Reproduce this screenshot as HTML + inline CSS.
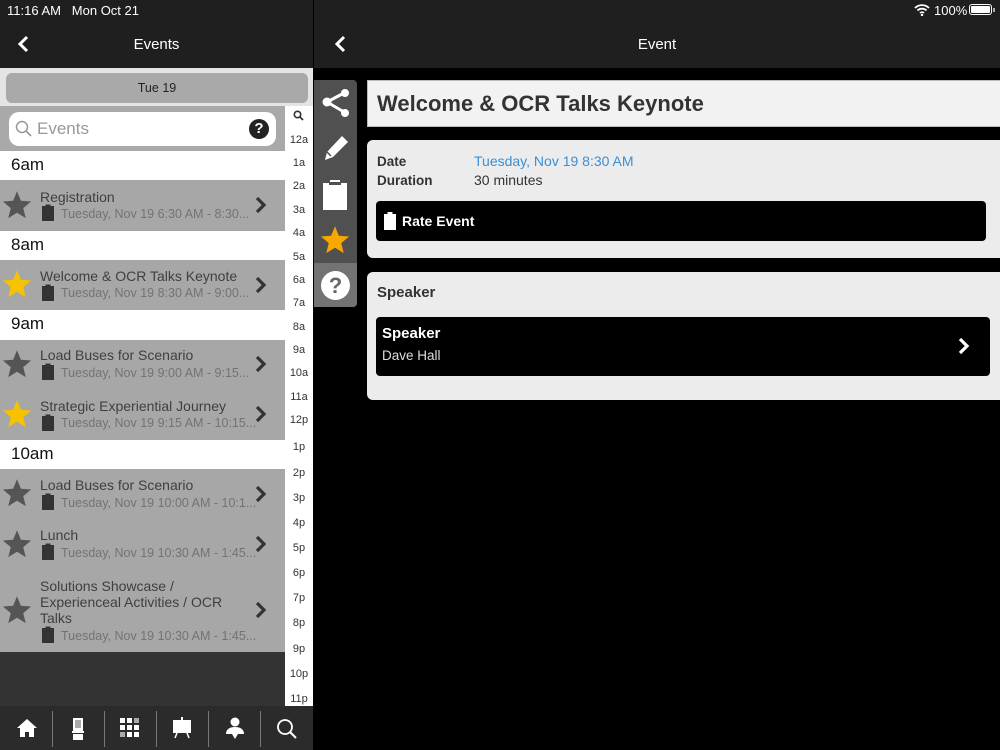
<!DOCTYPE html>
<html><head><meta charset="utf-8"><style>
*{margin:0;padding:0;box-sizing:border-box}
body{width:1000px;height:750px;background:#000;font-family:"Liberation Sans",sans-serif;position:relative;overflow:hidden}
.a{position:absolute}
.row{position:absolute;left:0;width:285px;background:#a7a7a7}
.sec{position:absolute;left:0;width:285px;background:#fff;font-size:17px;color:#111;padding-left:11px;line-height:28px}
.t{position:absolute;left:40px;font-size:14px;color:#3f3f3f;line-height:16px;width:200px}
.s{position:absolute;left:61px;font-size:12.5px;color:#737373;white-space:nowrap}
.idx{position:absolute;left:285px;width:28px;text-align:center;font-size:11px;color:#333}
.tab{position:absolute;top:711px;width:1px;height:36px;background:#777}
</style></head><body>
<!-- left panel -->
<div class="a" style="left:0;top:0;width:313px;height:750px;background:#333"></div>
<div class="a" style="left:0;top:0;width:1000px;height:68px;background:#1f1f1f"></div>
<div class="a" style="left:7px;top:3px;font-size:13px;color:#fff">11:16 AM&nbsp;&nbsp;&nbsp;Mon Oct 21</div>
<div class="a" style="left:934px;top:3px;font-size:13px;color:#fff">100%</div>
<svg class="a" style="left:914px;top:4px" width="16" height="12" viewBox="0 0 16 12"><path d="M1 4a10 10 0 0 1 14 0M3.5 6.5a6.5 6.5 0 0 1 9 0M6 9a3 3 0 0 1 4 0" stroke="#fff" stroke-width="1.8" fill="none"/><circle cx="8" cy="11" r="1.2" fill="#fff"/></svg>
<div class="a" style="left:969px;top:4px;width:23px;height:11px;border:1px solid #fff;border-radius:3px;padding:1px"><div style="background:#fff;width:100%;height:100%;border-radius:1px"></div></div>
<div class="a" style="left:993px;top:8px;width:2px;height:4px;background:#aaa"></div>
<div class="a" style="left:313px;top:0;width:1px;height:750px;background:#000"></div>
<svg class="a" style="left:16px;top:35px" width="14" height="18"><path d="M11 2L4 9l7 7" stroke="#fff" stroke-width="3" fill="none"/></svg>
<div class="a" style="left:0;top:36px;width:313px;text-align:center;font-size:15px;color:#fff">Events</div>
<div class="a" style="left:0;top:68px;width:313px;height:38px;background:#e4e4e4"></div>
<div class="a" style="left:6px;top:73px;width:302px;height:30px;background:#a9a9a9;border-radius:6px;text-align:center;line-height:30px;font-size:12.5px;color:#222">Tue 19</div>
<div class="a" style="left:0;top:106px;width:285px;height:45px;background:#a9a9a9"></div>
<div class="a" style="left:9px;top:112px;width:267px;height:34px;background:#fff;border-radius:10px"></div>
<svg class="a" style="left:15px;top:120px" width="18" height="18"><circle cx="7" cy="7" r="5.5" stroke="#999" stroke-width="1.5" fill="none"/><path d="M11 11l5 5" stroke="#999" stroke-width="1.6"/></svg>
<div class="a" style="left:37px;top:119px;font-size:17px;color:#999">Events</div>
<div class="a" style="left:249px;top:119px;width:20px;height:20px;border-radius:50%;background:#222;color:#fff;font-weight:bold;font-size:15px;text-align:center;line-height:20px">?</div>
<div class="a" style="left:285px;top:106px;width:28px;height:600px;background:#fff"></div>

<div class="sec" style="top:151px;height:29px">6am</div>
<div class="sec" style="top:231px;height:29px">8am</div>
<div class="sec" style="top:310px;height:30px">9am</div>
<div class="sec" style="top:440px;height:29px">10am</div>

<svg width="0" height="0" style="position:absolute"><defs>
<symbol id="star" viewBox="0 0 24 24"><path d="M12 1l3.1 7.6 8.2.6-6.3 5.3 2 8L12 18.2 5 22.5l2-8L.7 9.2l8.2-.6z"/></symbol>
<symbol id="clip" viewBox="0 0 14 18"><path d="M1 3h3.5V1.5h5V3H13v15H1z"/></symbol>
<symbol id="chev" viewBox="0 0 12 18"><path d="M2 2l7 7-7 7" stroke="#333" stroke-width="3.2" fill="none"/></symbol>
</defs></svg>

<!-- rows -->
<div class="row" style="top:180px;height:51px"></div>
<div class="row" style="top:260px;height:50px"></div>
<div class="row" style="top:340px;height:100px"></div>
<div class="row" style="top:469px;height:183px"></div>

<div class="t" style="top:189px">Registration</div><div class="s" style="top:207px">Tuesday, Nov 19 6:30 AM - 8:30...</div>
<div class="t" style="top:268px">Welcome &amp; OCR Talks Keynote</div><div class="s" style="top:286px">Tuesday, Nov 19 8:30 AM - 9:00...</div>
<div class="t" style="top:347px">Load Buses for Scenario</div><div class="s" style="top:366px">Tuesday, Nov 19 9:00 AM - 9:15...</div>
<div class="t" style="top:398px">Strategic Experiential Journey</div><div class="s" style="top:416px">Tuesday, Nov 19 9:15 AM - 10:15...</div>
<div class="t" style="top:477px">Load Buses for Scenario</div><div class="s" style="top:496px">Tuesday, Nov 19 10:00 AM - 10:1...</div>
<div class="t" style="top:527px">Lunch</div><div class="s" style="top:546px">Tuesday, Nov 19 10:30 AM - 1:45...</div>
<div class="t" style="top:578px">Solutions Showcase /<br>Experienceal Activities / OCR<br>Talks</div><div class="s" style="top:629px">Tuesday, Nov 19 10:30 AM - 1:45...</div>

<svg class="a" style="left:2px;top:190px" width="30" height="30" fill="#555"><use href="#star"/></svg>
<svg class="a" style="left:2px;top:269px" width="30" height="30" fill="#f7c300"><use href="#star"/></svg>
<svg class="a" style="left:2px;top:349px" width="30" height="30" fill="#555"><use href="#star"/></svg>
<svg class="a" style="left:2px;top:399px" width="30" height="30" fill="#f7c300"><use href="#star"/></svg>
<svg class="a" style="left:2px;top:478px" width="30" height="30" fill="#555"><use href="#star"/></svg>
<svg class="a" style="left:2px;top:529px" width="30" height="30" fill="#555"><use href="#star"/></svg>
<svg class="a" style="left:2px;top:595px" width="30" height="30" fill="#555"><use href="#star"/></svg>

<svg class="a" style="left:41px;top:203px" width="14" height="18" fill="#333"><use href="#clip"/></svg>
<svg class="a" style="left:41px;top:283px" width="14" height="18" fill="#333"><use href="#clip"/></svg>
<svg class="a" style="left:41px;top:362px" width="14" height="18" fill="#333"><use href="#clip"/></svg>
<svg class="a" style="left:41px;top:413px" width="14" height="18" fill="#333"><use href="#clip"/></svg>
<svg class="a" style="left:41px;top:492px" width="14" height="18" fill="#333"><use href="#clip"/></svg>
<svg class="a" style="left:41px;top:542px" width="14" height="18" fill="#333"><use href="#clip"/></svg>
<svg class="a" style="left:41px;top:625px" width="14" height="18" fill="#333"><use href="#clip"/></svg>

<svg class="a" style="left:255px;top:196px" width="12" height="18"><use href="#chev"/></svg>
<svg class="a" style="left:255px;top:276px" width="12" height="18"><use href="#chev"/></svg>
<svg class="a" style="left:255px;top:355px" width="12" height="18"><use href="#chev"/></svg>
<svg class="a" style="left:255px;top:405px" width="12" height="18"><use href="#chev"/></svg>
<svg class="a" style="left:255px;top:485px" width="12" height="18"><use href="#chev"/></svg>
<svg class="a" style="left:255px;top:535px" width="12" height="18"><use href="#chev"/></svg>
<svg class="a" style="left:255px;top:601px" width="12" height="18"><use href="#chev"/></svg>

<!-- index -->
<svg class="a" style="left:293px;top:110px" width="11" height="11"><circle cx="4.5" cy="4.5" r="3.2" stroke="#333" stroke-width="1.6" fill="none"/><path d="M7 7l3 3" stroke="#333" stroke-width="1.8"/></svg>
<div class="idx" style="top:134px">12a</div><div class="idx" style="top:157px">1a</div><div class="idx" style="top:180px">2a</div><div class="idx" style="top:204px">3a</div><div class="idx" style="top:227px">4a</div><div class="idx" style="top:251px">5a</div><div class="idx" style="top:274px">6a</div><div class="idx" style="top:297px">7a</div><div class="idx" style="top:321px">8a</div><div class="idx" style="top:344px">9a</div><div class="idx" style="top:367px">10a</div><div class="idx" style="top:391px">11a</div><div class="idx" style="top:414px">12p</div><div class="idx" style="top:441px">1p</div><div class="idx" style="top:467px">2p</div><div class="idx" style="top:492px">3p</div><div class="idx" style="top:517px">4p</div><div class="idx" style="top:542px">5p</div><div class="idx" style="top:567px">6p</div><div class="idx" style="top:592px">7p</div><div class="idx" style="top:617px">8p</div><div class="idx" style="top:643px">9p</div><div class="idx" style="top:668px">10p</div><div class="idx" style="top:693px">11p</div>

<!-- tab bar -->
<div class="a" style="left:0;top:706px;width:313px;height:44px;background:#2b2b2b"></div>
<div class="tab" style="left:52px"></div><div class="tab" style="left:104px"></div><div class="tab" style="left:156px"></div><div class="tab" style="left:208px"></div><div class="tab" style="left:260px"></div>
<svg class="a" style="left:16px;top:718px" width="22" height="20"><path d="M11 1L1 10h3v9h5v-5h4v5h5v-9h3z" fill="#fff"/></svg>
<svg class="a" style="left:72px;top:717px" width="12" height="24"><rect x="1" y="1" width="10" height="13" fill="#fff"/><rect x="0" y="14" width="12" height="2" fill="#fff"/><rect x="1" y="17" width="10" height="6" fill="#fff"/><rect x="3" y="3" width="6" height="8" fill="#2b2b2b" opacity=".4"/></svg>
<svg class="a" style="left:120px;top:718px" width="22" height="20" fill="#fff"><rect x="0" y="0" width="5" height="5"/><rect x="7" y="0" width="5" height="5"/><rect x="14" y="0" width="5" height="5" opacity=".6"/><rect x="0" y="7" width="5" height="5"/><rect x="7" y="7" width="5" height="5"/><rect x="14" y="7" width="5" height="5"/><rect x="0" y="14" width="5" height="5" opacity=".6"/><rect x="7" y="14" width="5" height="5"/><rect x="14" y="14" width="5" height="5"/></svg>
<svg class="a" style="left:171px;top:716px" width="22" height="24"><rect x="2" y="4" width="18" height="13" fill="#fff"/><rect x="10" y="1" width="2" height="3" fill="#fff"/><path d="M6 17l-2 5M16 17l2 5" stroke="#fff" stroke-width="1.5"/></svg>
<svg class="a" style="left:224px;top:716px" width="22" height="24" fill="#fff"><circle cx="11" cy="6" r="4.5"/><path d="M2 18c0-5 4-7 9-7s9 2 9 7h-6l-3 5-3-5z"/></svg>
<svg class="a" style="left:276px;top:718px" width="22" height="22"><circle cx="9" cy="9" r="7" stroke="#fff" stroke-width="1.8" fill="none"/><path d="M14 14l6 6" stroke="#fff" stroke-width="2"/></svg>

<!-- right -->
<svg class="a" style="left:333px;top:35px" width="14" height="18"><path d="M11 2L4 9l7 7" stroke="#fff" stroke-width="3" fill="none"/></svg>
<div class="a" style="left:314px;top:36px;width:686px;text-align:center;font-size:15px;color:#fff">Event</div>

<div class="a" style="left:314px;top:80px;width:43px;height:227px;background:#505050;border-radius:0 4px 4px 0"></div>
<div class="a" style="left:314px;top:263px;width:43px;height:44px;background:#737373;border-radius:0 0 4px 0"></div>
<svg class="a" style="left:320px;top:87px" width="32" height="32"><path d="M7 15L24 6M7 15l17 10" stroke="#fff" stroke-width="3"/><circle cx="7" cy="15" r="4.5" fill="#fff"/><circle cx="25" cy="6" r="4" fill="#fff"/><circle cx="25" cy="26" r="4" fill="#fff"/></svg>
<svg class="a" style="left:322px;top:134px" width="28" height="28"><path d="M20 2l6 6-15 15-8 3 2-8z" fill="#fff"/><path d="M5 18l4 4" stroke="#505050" stroke-width="1.5"/></svg>
<svg class="a" style="left:322px;top:178px" width="26" height="32" fill="#fff"><path d="M1 5h7V2h10v3h7v27H1z"/><rect x="7" y="4" width="12" height="3" fill="#505050"/></svg>
<svg class="a" style="left:320px;top:225px" width="30" height="30" fill="#f6a700"><use href="#star"/></svg>
<div class="a" style="left:321px;top:271px;width:29px;height:29px;border-radius:50%;background:#fff;color:#666;font-weight:bold;font-size:22px;text-align:center;line-height:29px">?</div>

<div class="a" style="left:367px;top:80px;width:633px;height:47px;background:#f2f2f2;border:1px solid #bbb;border-right:none"></div>
<div class="a" style="left:377px;top:91px;font-size:22px;font-weight:bold;color:#333">Welcome &amp; OCR Talks Keynote</div>

<div class="a" style="left:367px;top:140px;width:633px;height:118px;background:#ececec;border-radius:6px 0 0 6px"></div>
<div class="a" style="left:377px;top:152px;font-size:13.5px;font-weight:bold;color:#333;line-height:19px">Date<br>Duration</div>
<div class="a" style="left:474px;top:152px;font-size:14px;color:#3a8fd6;line-height:19px">Tuesday, Nov 19 8:30 AM</div>
<div class="a" style="left:474px;top:171px;font-size:14px;color:#333;line-height:19px">30 minutes</div>
<div class="a" style="left:376px;top:201px;width:610px;height:40px;background:#000;border-radius:4px"></div>
<svg class="a" style="left:383px;top:211px" width="14" height="20" fill="#fff"><path d="M1 3h3.5V1h5v2H13v16H1z"/></svg>
<div class="a" style="left:402px;top:213px;font-size:14px;font-weight:bold;color:#fff">Rate Event</div>

<div class="a" style="left:367px;top:272px;width:633px;height:128px;background:#ececec;border-radius:6px 0 0 6px"></div>
<div class="a" style="left:377px;top:284px;font-size:15px;font-weight:bold;color:#333">Speaker</div>
<div class="a" style="left:376px;top:317px;width:614px;height:59px;background:#000;border-radius:4px"></div>
<div class="a" style="left:382px;top:325px;font-size:15px;font-weight:bold;color:#fff">Speaker</div>
<div class="a" style="left:382px;top:348px;font-size:13.5px;color:#ddd">Dave Hall</div>
<svg class="a" style="left:958px;top:337px" width="12" height="18"><path d="M2 2l7 7-7 7" stroke="#fff" stroke-width="3.2" fill="none"/></svg>
</body></html>
